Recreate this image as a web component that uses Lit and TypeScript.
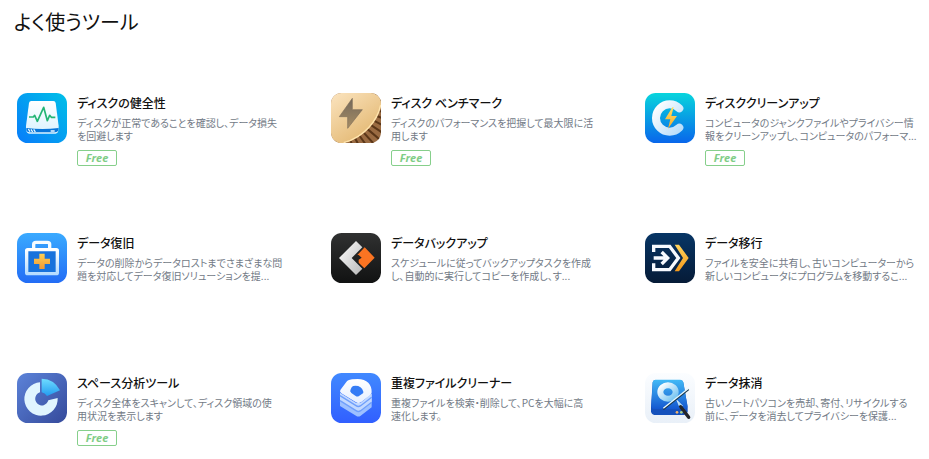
import { LitElement, html, css, svg, TemplateResult } from "lit";
import { customElement, property } from "lit/decorators.js";

interface Tool {
  icon: string;
  name: string;
  lines: string[];
  free?: boolean;
}

const TOOLS: Tool[] = [
  { icon: "health", name: "ディスクの健全性", lines: ["ディスクが正常であることを確認し、データ損失", "を回避します"], free: true },
  { icon: "benchmark", name: "ディスク ベンチマーク", lines: ["ディスクのパフォーマンスを把握して最大限に活", "用します"], free: true },
  { icon: "cleanup", name: "ディスククリーンアップ", lines: ["コンピュータのジャンクファイルやプライバシー情", "報をクリーンアップし、コンピュータのパフォーマ..."], free: true },
  { icon: "recovery", name: "データ復旧", lines: ["データの削除からデータロストまでさまざまな問", "題を対応してデータ復旧ソリューションを提..."] },
  { icon: "backup", name: "データバックアップ", lines: ["スケジュールに従ってバックアップタスクを作成", "し、自動的に実行してコピーを作成し、す..."] },
  { icon: "transfer", name: "データ移行", lines: ["ファイルを安全に共有し、古いコンピューターから", "新しいコンピュータにプログラムを移動するこ..."] },
  { icon: "space", name: "スペース分析ツール", lines: ["ディスク全体をスキャンして、ディスク領域の使", "用状況を表示します"], free: true },
  { icon: "duplicate", name: "重複ファイルクリーナー", lines: ["重複ファイルを検索・削除して、PCを大幅に高", "速化します。"] },
  { icon: "erase", name: "データ抹消", lines: ["古いノートパソコンを売却、寄付、リサイクルする", "前に、データを消去してプライバシーを保護..."] },
];

const gradient = (id: string, from: string, to: string, x2 = 0, y2 = 1) => svg`
  <linearGradient id=${id} x1="0" y1="0" x2=${x2} y2=${y2}>
    <stop offset="0" stop-color=${from} /><stop offset="1" stop-color=${to} />
  </linearGradient>`;

const tile = svg`<rect width="150" height="150" rx="32" fill="url(#bg)" />`;

const bristles = Array.from({ length: 15 }, (_, i) => {
  const a = ((i * 7 - 5) * Math.PI) / 180;
  const c = Math.cos(a);
  const s = Math.sin(a);
  return `M${20 + 110 * c} ${16 + 120 * s}L${20 + 200 * c} ${16 + 200 * s}`;
}).join("");

const ICONS: Record<string, TemplateResult> = {
  health: svg`
    <defs>
      <linearGradient id="bg" x1="1" y1="0" x2="0" y2="1">
        <stop offset="0" stop-color="#00c0e8" /><stop offset="1" stop-color="#087cfa" />
      </linearGradient>
      ${gradient("face", "#ffffff", "#d9f2ff")}
    </defs>
    ${tile}
    <path d="M43 24H109Q115 24 116 30L125 99Q126 121 116 122H36Q26 121 27 99L36 30Q37 24 43 24Z" fill="url(#face)" />
    <path d="M28 105Q76 111 125 105L124 112Q122 118 114 118H38Q30 118 28 112Z" fill="#0875d9" />
    <path d="M34 108L39 116M42 109L47 117M50 109L55 117M101 114H113" stroke="#e9f8ff" stroke-width="4" />
    <path d="M36 72H49L53 67L61 85L80 43L91 83L98 67L103 73H115" fill="none" stroke="#23b574" stroke-width="5" stroke-linejoin="round" />`,
  benchmark: svg`
    <defs>${gradient("bg", "#fbe4bf", "#e2b66f", 0.7, 1)}
      ${gradient("bolt", "#74685a", "#a68d65")}
      <clipPath id="clip"><rect width="150" height="150" rx="32" /></clipPath></defs>
    <g clip-path="url(#clip)">
      <rect width="150" height="150" fill="#9a6b42" />
      <path d=${bristles} stroke="#5a3618" stroke-width="6" />
      <path d="M0 0H150V36C141 82 101 134 38 150H0Z" fill="url(#bg)" />
      <path d="M149 36C140 82 100 132 38 149" fill="none" stroke="#ffe4ad" stroke-width="4" />
      <path d="M64 16L25 71H50V106L94 50H64Z" fill="url(#bolt)" stroke="#80705b" stroke-width="2" stroke-linejoin="round" />
    </g>`,
  cleanup: svg`
    <defs>${gradient("bg", "#08d5dd", "#0966eb")}
      ${gradient("ring", "#ffffff", "#b9defa", 1, 1)}
      ${gradient("bolt", "#ffe066", "#f4aa2c")}</defs>
    ${tile}
    <path d="M103 46A41 41 0 1 0 103 104" fill="none" stroke="url(#ring)" stroke-width="24" stroke-linecap="round" />
    <path d="M82 43L60 79H76L69 107L96 69H79L86 43Z" fill="url(#bolt)" />`,
  recovery: svg`
    <defs>${gradient("bg", "#3aaaff", "#226cf5")}
      ${gradient("case", "#ffffff", "#b6dcff")}
      ${gradient("cross", "#ffd052", "#f29833")}</defs>
    ${tile}
    <path d="M50 45V34Q50 28 57 28H91Q98 28 98 34V45" fill="none" stroke="#f7fcff" stroke-width="10" />
    <rect x="29" y="50" width="92" height="72" rx="3" fill="#1872dc" stroke="url(#case)" stroke-width="10" />
    <path d="M67 62H83V77H99V93H83V108H67V93H51V77H67Z" fill="url(#cross)" />`,
  backup: svg`
    <defs>${gradient("bg", "#303131", "#111212")}
      ${gradient("arrow", "#ffffff", "#b8b8b8", 1, 1)}</defs>
    ${tile}
    <path d="M75 24L94 43L62 75L94 107L75 126L24 75Z" fill="url(#arrow)" />
    <path d="M101 43L131 74L100 106L83 89V80L92 74L83 66L79 66Z" fill="#fa7422" />`,
  transfer: svg`
    <defs>${gradient("bg", "#073565", "#061b37")}
      ${gradient("gold", "#ffd45d", "#f5991a")}</defs>
    ${tile}
    <path d="M26 57V40H74L100 75L74 110H26V91" fill="none" stroke="#f7faff" stroke-width="10" />
    <path d="M26 75H60M50 57L68 75L50 93" fill="none" stroke="#f7faff" stroke-width="10" />
    <path d="M89 35H102L131 75L102 115H89L114 75Z" fill="url(#gold)" />`,
  space: svg`
    <defs>${gradient("bg", "#5c83d9", "#354a9b", 1, 1)}
      ${gradient("slice", "#70dcff", "#239cf0")}</defs>
    ${tile}
    <path d="M69 28A50 50 0 1 0 122 75L94 82A20 20 0 1 1 69 58Z" fill="#e0f5ff" />
    <path d="M74 17Q112 18 129 52L90 69Q84 60 74 58Z" fill="url(#slice)" />`,
  duplicate: svg`
    <defs>${gradient("bg", "#4189ff", "#315fff")}
      ${gradient("sheet", "#ffffff", "#e6efff")}</defs>
    ${tile}
    <path d="M27 60L75 90H89L122 62V103L89 128Q82 133 75 128L27 99Z" fill="#9dc0ff" />
    <path d="M27 60L75 90H89L122 62V88L89 113Q82 118 75 113L27 83Z" fill="#c3d9ff" />
    <path d="M27 83L75 113Q82 118 89 113L122 88M27 68L75 98Q82 103 89 98L122 73" fill="none" stroke="#6f9ffb" stroke-width="4" />
    <path d="M52 22Q60 18 80 18C108 18 123 35 122 58Q122 63 117 67L90 88Q82 93 75 88L31 61Q25 57 28 51L46 27Q48 24 52 22Z" fill="url(#sheet)" />
    <path d="M67 39Q91 36 97 56Q98 60 94 62L84 69Q79 72 74 69L61 60Q55 55 59 49L62 43Q64 40 67 39Z" fill="#347bf5" />`,
  erase: svg`
    <defs>${gradient("bg", "#fbfdff", "#e9f0f8")}
      ${gradient("disk", "#42baf6", "#1458d0")}
      ${gradient("ring", "#ffffff", "#70c2f1", 1, 1)}</defs>
    ${tile}
    <path d="M31 21H106Q113 21 115 29L128 101V115Q126 125 116 126H28Q19 125 18 115V101L23 29Q24 21 31 21Z" fill="#1551bc" />
    <path d="M31 20H106Q113 20 115 28L127 98Q128 107 119 108H27Q19 107 19 98L23 28Q24 20 31 20Z" fill="url(#disk)" />
    <ellipse cx="69" cy="57" rx="23" ry="20" fill="none" stroke="url(#ring)" stroke-width="18" />
    <path d="M55 109L131 49" stroke="#1c3546" stroke-width="5" />
    <path d="M55 106L131 46" stroke="#e8faff" stroke-width="4" />
    <path d="M96 82L105 104L112 98Z" fill="#9bd8f5" stroke="#fff" stroke-width="2" />
    <path d="M107 101L131 133" stroke="#232529" stroke-width="10" stroke-linecap="round" />
    <circle cx="96" cy="118" r="4" fill="#f5b46b" /><circle cx="109" cy="118" r="4" fill="#a9d18b" />`,
};

@customElement("tool-icon")
class ToolIcon extends LitElement {
  @property() name = "health";

  static styles = css`
    :host { display: block; width: 50px; height: 50px; flex: none; }
    .picture { display: block; width: 100%; height: 100%; }
  `;

  render() {
    return html`<svg class="picture" viewBox="0 0 150 150" aria-hidden="true">${ICONS[this.name]}</svg>`;
  }
}

@customElement("tool-card")
class ToolCard extends LitElement {
  @property({ attribute: false }) tool!: Tool;

  static styles = css`
    :host { display: flex; gap: 10px; min-width: 0; }
    .body { min-width: 0; }
    .name { margin: 0; font-size: 12px; line-height: 20px; font-weight: 500; color: #111; white-space: nowrap; }
    .text { margin: 3px 0 0; font-size: 10px; line-height: 13px; color: #727a86; white-space: nowrap; }
    .free {
      display: inline-block; box-sizing: border-box; width: 40px; height: 16px; margin-top: 8px;
      border: 1px solid #86cf8b; border-radius: 2px; color: #80cd86; text-align: center;
      font: italic 700 11px/14px "Open Sans", sans-serif; vertical-align: top;
    }
  `;

  render() {
    const { icon, name, lines, free } = this.tool;
    return html`
      <tool-icon name=${icon}></tool-icon>
      <div class="body">
        <h2 class="name">${name}</h2>
        <p class="text">${lines[0]}<br />${lines[1]}</p>
        ${free ? html`<span class="free">Free</span>` : ""}
      </div>`;
  }
}

@customElement("app-root")
class AppRoot extends LitElement {
  static styles = css`
    :host {
      display: block; background: #fff; overflow: hidden;
      font-family: "Noto Sans CJK JP", sans-serif; font-feature-settings: "palt";
    }
    .heading { margin: 0; padding: 6px 14px 0; font-size: 20px; line-height: 32px; font-weight: 400; color: #111; }
    .tools {
      display: grid; grid-template-columns: repeat(3, minmax(0, 1fr)); grid-auto-rows: minmax(80px, auto);
      gap: 60px 48px; margin: 0; padding: 55px 18px 0 17px; list-style: none;
    }
  `;

  render() {
    return html`
      <main>
        <h1 class="heading">よく使うツール</h1>
        <ul class="tools">
          ${TOOLS.map((tool) => html`<li><tool-card .tool=${tool}></tool-card></li>`)}
        </ul>
      </main>`;
  }
}
